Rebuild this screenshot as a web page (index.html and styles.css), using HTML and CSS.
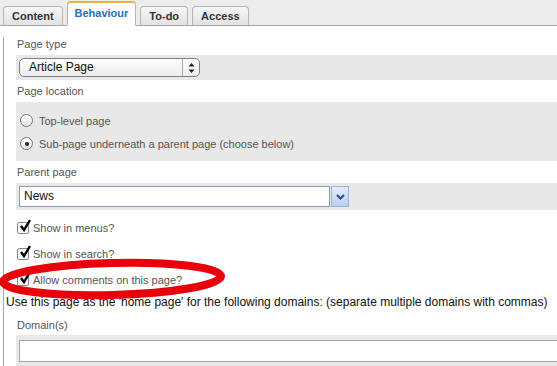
FILE: index.html
```html
<!DOCTYPE html>
<html lang="en">
<head>
  <meta charset="UTF-8">
  <title>Edit Page - Behaviour</title>
  <link rel="stylesheet" href="styles.css">
</head>
<body>
  <div class="tabs">
    <div class="tab">Content</div>
    <div class="tab active">Behaviour</div>
    <div class="tab">To-do</div>
    <div class="tab">Access</div>
  </div>

  <div class="panel">
    <div class="label first">Page type</div>
    <div class="band">
      <div class="select">
        <span class="select-text">Article Page</span>
        <span class="select-arrows">
          <svg width="7" height="10" viewBox="0 0 7 10"><path d="M3.5 0 L6.5 3.5 H0.5 Z M3.5 10 L6.5 6.5 H0.5 Z" fill="#222"/></svg>
        </span>
      </div>
    </div>

    <div class="label">Page location</div>
    <div class="band radios">
      <div class="radio-row"><span class="radio"></span>Top-level page</div>
      <div class="radio-row"><span class="radio checked"></span>Sub-page underneath a parent page (choose below)</div>
    </div>

    <div class="label">Parent page</div>
    <div class="band">
      <div class="combo">
        <div class="combo-input">News</div>
        <div class="combo-btn">
          <svg width="9" height="6" viewBox="0 0 9 6"><path d="M1 1 L4.5 4.5 L8 1" fill="none" stroke="#2b4a8a" stroke-width="2"/></svg>
        </div>
      </div>
    </div>

    <div class="check-row"><span class="check"><svg width="14" height="14" viewBox="0 0 14 14"><path d="M3 7 L6 11 L12 1" fill="none" stroke="#000" stroke-width="2.4"/></svg></span>Show in menus?</div>
    <div class="check-row"><span class="check"><svg width="14" height="14" viewBox="0 0 14 14"><path d="M3 7 L6 11 L12 1" fill="none" stroke="#000" stroke-width="2.4"/></svg></span>Show in search?</div>
    <div class="check-row"><span class="check"><svg width="14" height="14" viewBox="0 0 14 14"><path d="M3 7 L6 11 L12 1" fill="none" stroke="#000" stroke-width="2.4"/></svg></span>Allow comments on this page?</div>

    <div class="note">Use this page as the 'home page' for the following domains: (separate multiple domains with commas)</div>

    <div class="label domain-label">Domain(s)</div>
    <div class="band domain-band">
      <div class="text-input"></div>
    </div>
  </div>

  <!-- highlight drawn over the form -->
  <svg class="highlight" width="240" height="50" viewBox="0 0 240 50">
    <ellipse cx="112" cy="21" rx="109" ry="16" fill="none" stroke="#e8000b" stroke-width="8" transform="rotate(-1.5 112 21)"/>
  </svg>
</body>
</html>
```

FILE: styles.css
```css
body {
  margin: 0;
  background-color: #fff;
  font-family: "Liberation Sans", Arial, sans-serif;
  overflow: hidden;
  position: relative;
}
.tabs {
  display: flex;
  align-items: flex-end;
  gap: 4px;
  height: 25px;
  padding-left: 3px;
  background-color: #ececec;
  border-bottom: 1px solid #a8a8a8;
}
.tab {
  height: 18px;
  line-height: 18px;
  padding: 0 8px;
  margin-bottom: -1px;
  border: 1px solid #b4b4b4;
  border-bottom: 1px solid #a8a8a8;
  border-radius: 4px 4px 0 0;
  background: linear-gradient(#f6f6f6, #e2e2e2);
  color: #333;
  font-size: 11px;
  font-weight: bold;
}
.tab.active {
  height: 22px;
  line-height: 21px;
  padding: 0 7px;
  background: #fff;
  border-top: 2px solid #f3b03c;
  border-bottom-color: #fff;
  color: #2470b8;
}
.panel {
  margin-left: 3px;
  padding-left: 12px;
  border-left: 1px solid #a8a8a8;
  padding-bottom: 20px;
}
.label {
  height: 14px;
  line-height: 14px;
  font-size: 11px;
  color: #555;
  margin: 4px 0 4px 1px;
}
.label.first {
  margin-top: 11px;
}
.band {
  background-color: #e8e8e8;
  padding: 3px;
}
.select {
  display: flex;
  width: 179px;
  height: 17px;
  border: 1px solid #808080;
  border-radius: 5px;
  background: linear-gradient(#fdfdfd, #ececec);
}
.select-text {
  flex: 1;
  padding-left: 9px;
  font-size: 12px;
  line-height: 17px;
  color: #111;
}
.select-arrows {
  width: 16px;
  border-left: 1px solid #aaa;
  display: flex;
  align-items: center;
  justify-content: center;
}
.radios {
  height: 45px;
  padding: 11px 3px 3px 3px;
}
.radio-row {
  display: flex;
  align-items: center;
  height: 15px;
  margin-bottom: 8px;
  font-size: 11px;
  color: #555;
}
.radio {
  width: 11px;
  height: 11px;
  border: 1px solid #777;
  border-radius: 50%;
  background: linear-gradient(#fff, #e4e4e4);
  margin: 0 6px 0 1px;
  display: flex;
  align-items: center;
  justify-content: center;
}
.radio.checked::after {
  content: "";
  width: 4px;
  height: 4px;
  border-radius: 50%;
  background: #222;
}
.combo {
  display: flex;
  height: 21px;
}
.combo-input {
  width: 305px;
  border: 1px solid #8a9cb4;
  background: #fff;
  font-size: 12px;
  line-height: 19px;
  padding-left: 4px;
  color: #111;
}
.combo-btn {
  width: 16px;
  margin-left: 1px;
  border: 1px solid #9db2d4;
  background: linear-gradient(#e4ecfb, #bccdf0);
  display: flex;
  align-items: center;
  justify-content: center;
}
.check-row {
  display: flex;
  align-items: center;
  height: 14px;
  margin-top: 11px;
  font-size: 11px;
  color: #555;
}
.check-row + .check-row {
  margin-top: 12px;
}
.check {
  position: relative;
  width: 10px;
  height: 10px;
  border: 1px solid #888;
  border-radius: 2px;
  background: #fafafa;
  margin: 0 4px 0 1px;
}
.check svg {
  position: absolute;
  left: 0;
  top: -4px;
}
.note {
  margin: 8px 0 0 -10px;
  font-size: 12px;
  line-height: 14px;
  color: #111;
  white-space: nowrap;
}
.domain-label {
  margin-top: 9px;
  margin-bottom: 3px;
}
.domain-band {
  margin-right: -30px;
  padding: 5px 3px 5px 3px;
}
.text-input {
  height: 20px;
  border: 1px solid #a5a5a5;
  background: #fff;
}
.highlight {
  position: absolute;
  left: 0;
  top: 258px;
}
```
